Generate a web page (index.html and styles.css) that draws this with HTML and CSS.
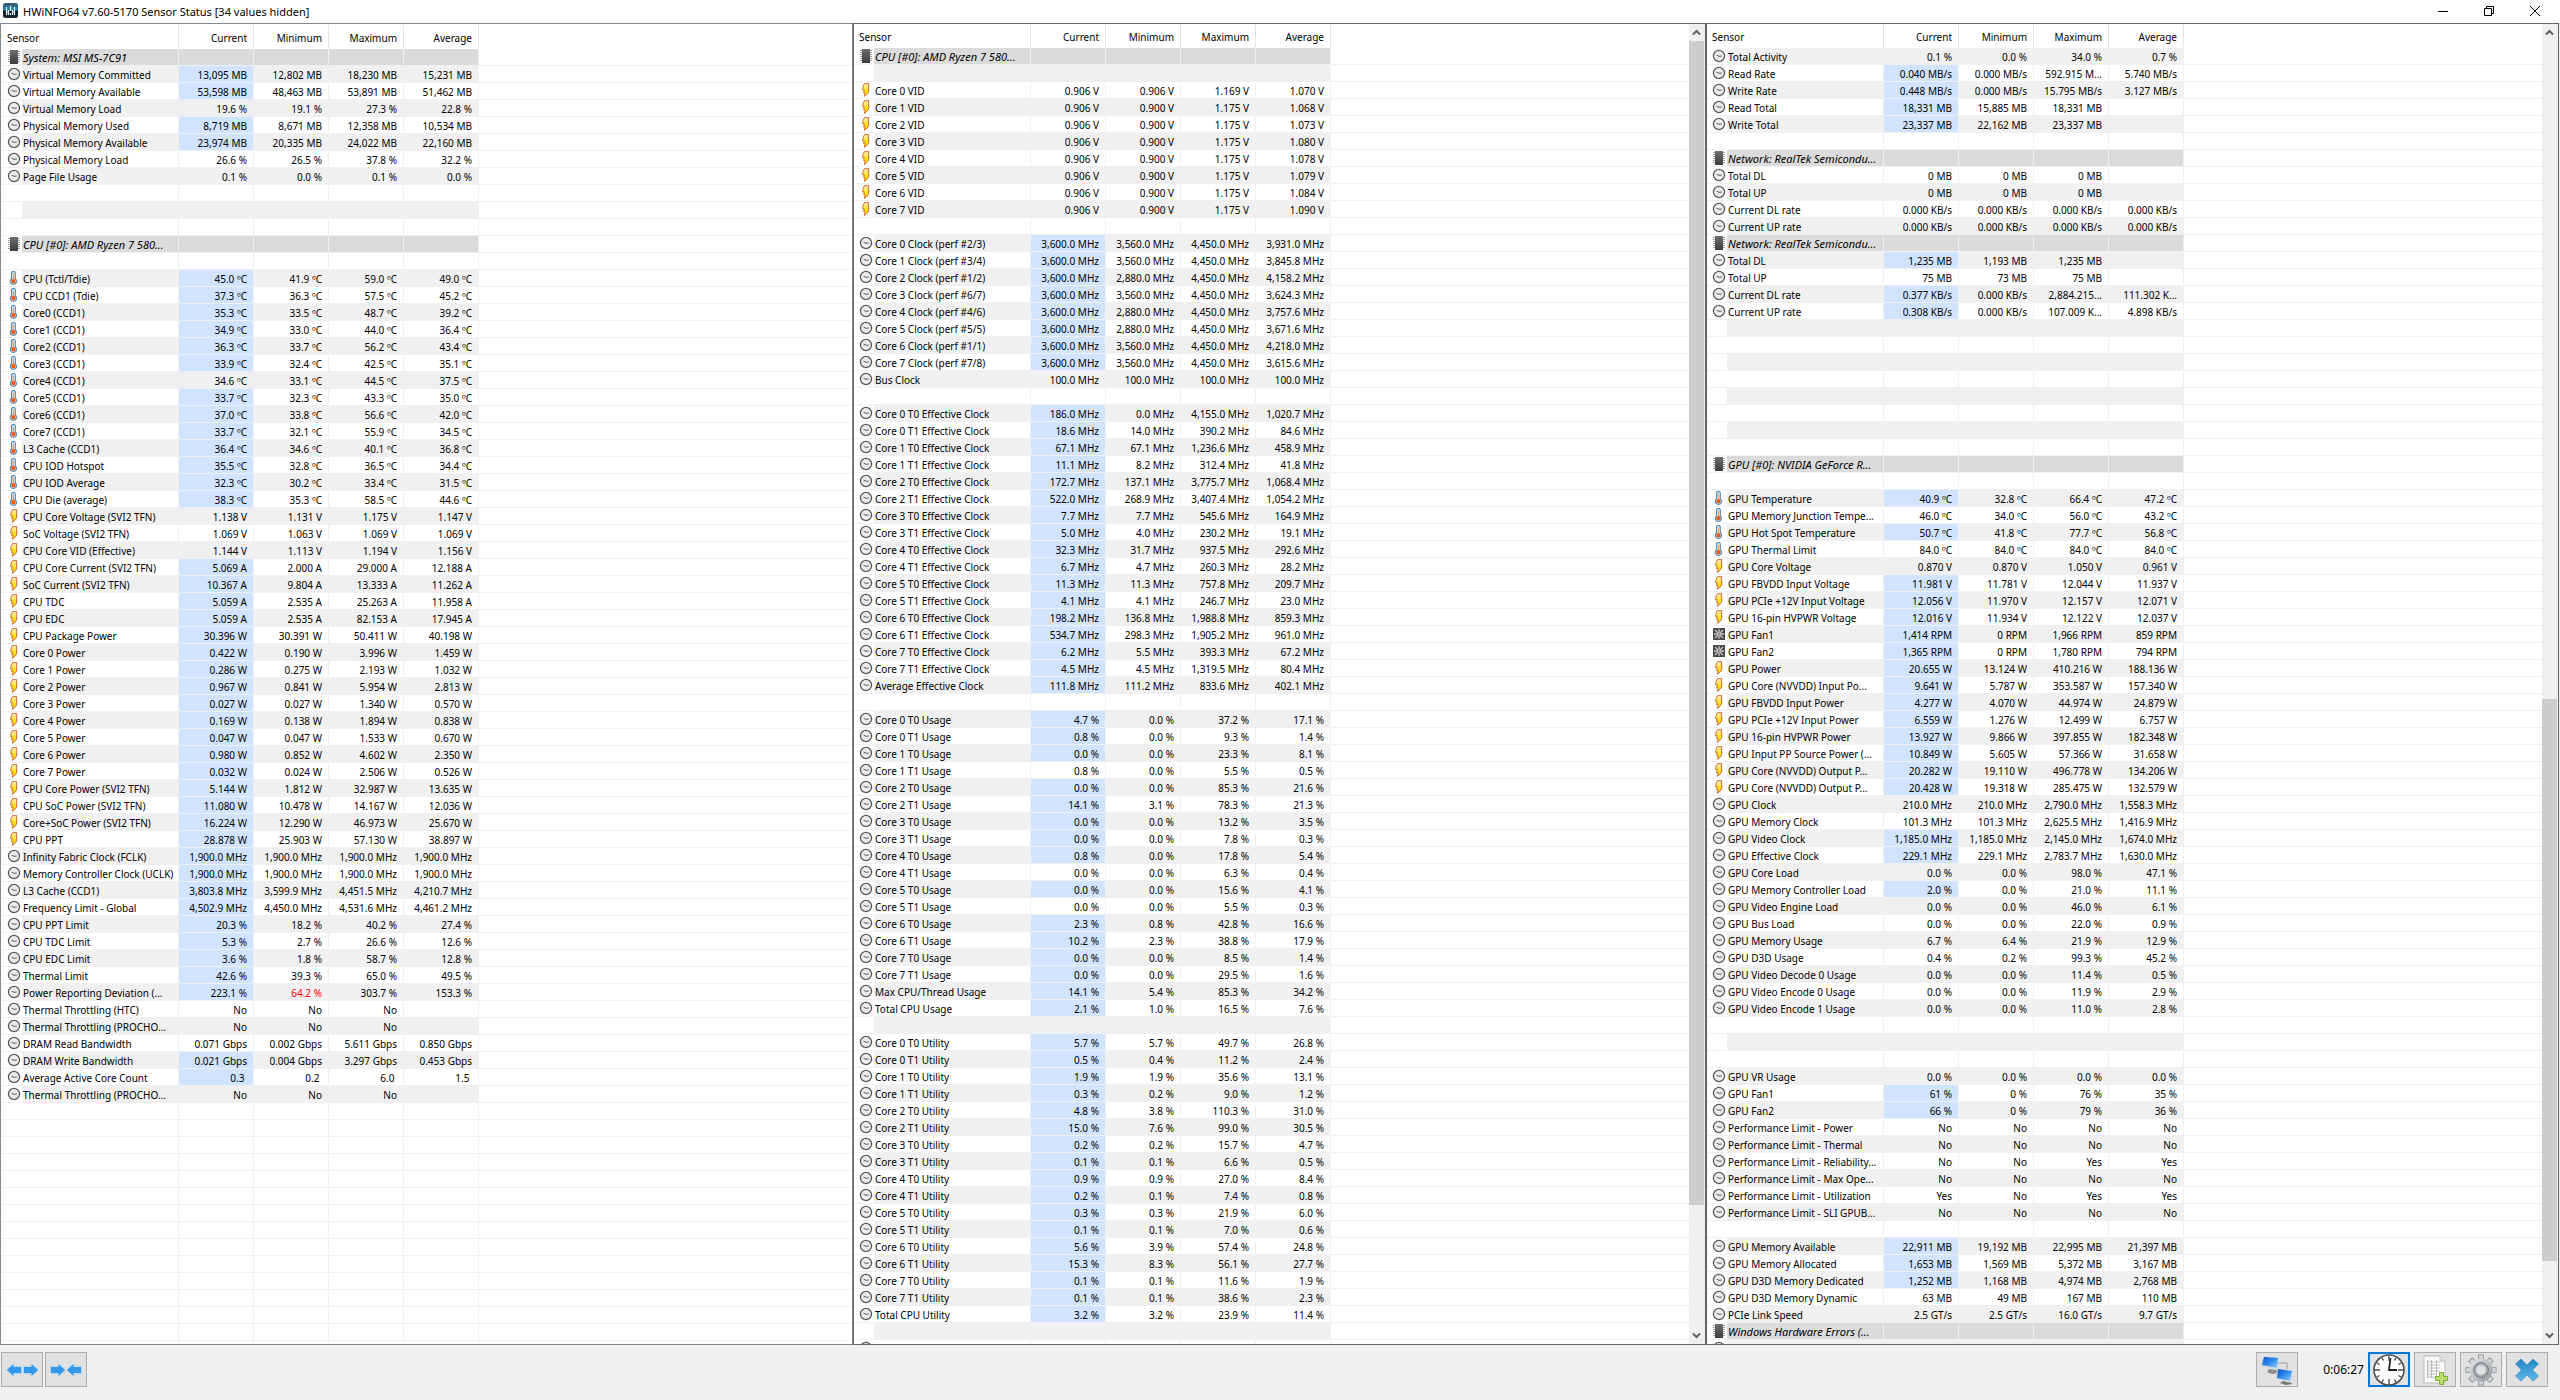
FILE: index.html
```html
<!DOCTYPE html>
<html lang="en">
<head>
<meta charset="utf-8">
<title>HWiNFO64 v7.60-5170 Sensor Status</title>
<link rel="stylesheet" href="styles.css">
</head>
<body>
<svg class="sprite" aria-hidden="true">
  <defs>
    <linearGradient id="g-app" x1="0" y1="0" x2="0" y2="1"><stop offset="0" stop-color="#3b5566"/><stop offset=".45" stop-color="#1f86b8"/><stop offset=".55" stop-color="#0a1a24"/><stop offset="1" stop-color="#1a2a33"/></linearGradient>
    <linearGradient id="g-bolt" x1="0" y1="0" x2="0" y2="1"><stop offset="0" stop-color="#fff0c8"/><stop offset=".6" stop-color="#ffe100"/><stop offset="1" stop-color="#ffee00"/></linearGradient>
    <linearGradient id="g-chip" x1="0" y1="0" x2="0" y2="1"><stop offset="0" stop-color="#6e6e70"/><stop offset="1" stop-color="#3c3c3f"/></linearGradient>
    <linearGradient id="g-screen" x1="0" y1="0" x2="1" y2="1"><stop offset="0" stop-color="#0a4fc4"/><stop offset=".5" stop-color="#2e8cf0"/><stop offset="1" stop-color="#9fd4ff"/></linearGradient>
    <linearGradient id="g-gear" x1="0" y1="0" x2="1" y2="1"><stop offset="0" stop-color="#e4e8e9"/><stop offset=".5" stop-color="#bcc2c4"/><stop offset="1" stop-color="#8f9698"/></linearGradient>
    <linearGradient id="g-x" x1="0" y1="0" x2="0" y2="1"><stop offset="0" stop-color="#1f86c4"/><stop offset="1" stop-color="#62b6ea"/></linearGradient>
  </defs>
  <symbol id="i-clock" viewBox="0 0 14 14"><circle cx="7" cy="7" r="6.4" fill="#c4c4c4"/><circle cx="7" cy="7" r="5.5" fill="#ececec" stroke="#484848" stroke-width="1.1"/><path d="M4.500 6.200 7 7.300l2.800-.3" fill="none" stroke="#5a5a5a" stroke-width="1"/></symbol>
  <symbol id="i-chip" viewBox="0 0 14 14"><path d="M1 1.500h12M1 3.500h12M1 5.500h12M1 7.500h12M1 9.500h12M1 11.500h12" stroke="#9c9c9c"/><path d="M3 0h8v14H3z" fill="url(#g-chip)"/></symbol>
  <symbol id="i-temp" viewBox="0 0 14 14"><path d="M4.500 8V1.900a1.900 1.500 0 0 1 3.800 0V8c2 1.700 1.600 5.400-1.900 5.400S2.500 9.700 4.500 8z" fill="#d3ebf8" stroke="#4f8db8" stroke-width="1.100"/><path d="M6.400 2.500v7" stroke="#f4a070" stroke-width="1.400"/><path d="M4.400 8.300h4v3.900h-4z" fill="#f05a14"/></symbol>
  <symbol id="i-bolt" viewBox="0 0 14 14"><path d="M5.500.6h4.300l-.6 3h.7L9.400 6.500h.7L9 10.200 5.400 13.400l.8-3.700H4.700l.5-3H3.600l.5-3.300z" fill="url(#g-bolt)" stroke="#c8602a" stroke-width=".9" stroke-linejoin="round"/></symbol>
  <symbol id="i-fan" viewBox="0 0 14 14"><path d="M1 1h12v12H1z" fill="#484848"/><path d="M7 2v10M2 7h10M3 3l8 8M11 3l-8 8" stroke="#cfc8c8" stroke-width="1.300"/><circle cx="7" cy="7" r="1.500" fill="#9a8686"/></symbol>
  <symbol id="i-left" viewBox="0 0 16 16"><path d="M0 8 8 0v4h8v8H8v4z" fill="#f4f9fd" stroke="#c3d3df" stroke-width=".6"/><path d="M.800 8 7.500 1.800v2.900h7.800v6.600H7.500v2.900z" fill="#3498e6"/></symbol>
  <symbol id="i-right" viewBox="0 0 16 16"><path d="M16 8 8 0v4H0v8h8v4z" fill="#f4f9fd" stroke="#c3d3df" stroke-width=".6"/><path d="M15.200 8 8.500 1.800v2.900H.700v6.600h7.800v2.900z" fill="#3498e6"/></symbol>
</svg>

<div class="window">
  <header class="titlebar">
    <svg class="app-icon" viewBox="0 0 15 15" aria-hidden="true"><rect width="15" height="15" rx="2.500" fill="url(#g-app)"/><path d="M3.500 4v8M5.500 7v5M7.500 3v5M7.500 10v2M9.500 7v5M11.500 4v8M3 9h3M9 9h3" stroke="#e6f4fa" stroke-width="1.200"/></svg>
    <h1 class="title">HWiNFO64 v7.60-5170 Sensor Status [34 values hidden]</h1>
    <button class="caption" aria-label="Minimize"><svg width="10" height="10" viewBox="0 0 10 10"><path d="M0 5.500h10" stroke="#000"/></svg></button>
    <button class="caption" aria-label="Restore"><svg width="10" height="10" viewBox="0 0 10 10"><path d="M.5 2.500h7v7h-7zM2.500 2.500v-2h7v7h-2" fill="none" stroke="#000"/></svg></button>
    <button class="caption" aria-label="Close"><svg width="10" height="10" viewBox="0 0 10 10"><path d="M0 0l10 10M10 0 0 10" stroke="#000"/></svg></button>
  </header>

  <main class="panels" id="panels"></main>

  <footer class="toolbar">
    <div class="group">
      <button class="tool" aria-label="Expand columns"><svg class="arrow"><use href="#i-left"/></svg><svg class="arrow"><use href="#i-right"/></svg></button>
      <button class="tool close-pair" aria-label="Shrink columns"><svg class="arrow"><use href="#i-right"/></svg><svg class="arrow"><use href="#i-left"/></svg></button>
    </div>
    <div class="group group-right">
      <button class="tool" aria-label="Remote monitoring"><svg width="34" height="32" viewBox="0 0 34 32"><path d="M17 9h10v8" fill="none" stroke="#9a9a9a"/><path d="M9 15l8 1 1 3-6 1-5-2z" fill="#8c8c8c"/><path d="M3 2l16 1-1 13L1 12z" fill="#d8dcdf"/><path d="M4 3l14 1-1 10L2 11z" fill="url(#g-screen)"/><path d="M23 27l8 1 1 2-6 1-6-2z" fill="#777"/><path d="M17 14l16 2-2 13-15-4z" fill="#d8dcdf"/><path d="M18 15l14 2-2 10-13-3z" fill="url(#g-screen)"/></svg></button>
      <time class="elapsed">0:06:27</time>
      <button class="tool tool-focus" aria-label="Reset clock"><svg width="32" height="32" viewBox="0 0 32 32"><circle cx="16" cy="16" r="15" fill="#fff" stroke="#4a4a4a" stroke-width="1.600"/><path d="M16 2v5M16 25v5M2 16h5M25 16h5M9 3.900l1.500 2.600M21.500 25.500l1.500 2.600M3.900 9l2.600 1.500M25.500 21.500l2.600 1.500M23 3.900l-1.500 2.600M10.500 25.500 9 28.100M28.100 9l-2.600 1.500M6.500 21.500 3.900 23" stroke="#444" stroke-width="1.300"/><path d="M17.500 4 16 16h8" fill="none" stroke="#222" stroke-width="1.800"/></svg></button>
      <button class="tool" aria-label="Log sensors"><svg width="30" height="32" viewBox="0 0 30 32"><path d="M4 2h16l5 5v22H4z" fill="#fafafa" stroke="#bdbdbd"/><path d="M20 2v5h5" fill="#e2e2e2" stroke="#bdbdbd"/><path d="M8 8h12M8 11h12M8 14h12M8 17h12M8 20h9M8 23h9M7.500 6v18M11.500 6v18M16.500 6v18" stroke="#bcbcbc"/><path d="M19.500 18.500h4v4h4v4h-4v4h-4v-4h-4v-4h4z" fill="#b9dc6a" stroke="#7fae35"/></svg></button>
      <button class="tool" aria-label="Configure sensors"><svg width="32" height="32" viewBox="0 0 32 32"><g stroke="#8d9496" stroke-width="6"><path d="M16 .500v31M.500 16h31M5.200 5.200l21.600 21.600M26.800 5.200 5.200 26.800"/></g><g stroke="#d0d5d7" stroke-width="4.400"><path d="M16 1.200v29.600M1.200 16h29.600M5.800 5.800l20.400 20.400M26.200 5.800 5.800 26.200"/></g><circle cx="16" cy="16" r="11.500" fill="url(#g-gear)"/><circle cx="16" cy="16" r="7.500" fill="#9fa5a7" stroke="#7c8385"/><circle cx="16" cy="16" r="5" fill="#e1e1e1" stroke="#c9cdce"/></svg></button>
      <button class="tool" aria-label="Close sensors"><svg width="24" height="24" viewBox="0 0 24 24"><path d="M6 1l6 6 6-6 5.500 5-6 6 6 6-5.500 5-6-6-6 6-5.500-5 6-6-6-6z" fill="url(#g-x)" stroke="#2d8cc8" stroke-width=".7"/></svg></button>
    </div>
  </footer>
</div>
<script src="app.js"></script>
</body>
</html>
```
FILE: styles.css
```css
* { box-sizing: border-box; }

body {
  margin: 0;
  background: #fff;
  color: #000;
  font-family: "Noto Sans", "Open Sans", sans-serif;
  font-size: 10px;
}

button { padding: 0; font: inherit; }
.sprite { position: absolute; width: 0; height: 0; }

.window {
  display: flex;
  flex-direction: column;
  height: 100vh;
  background: #f0f0f0;
}

/* Title bar */
.titlebar {
  display: flex;
  align-items: center;
  flex: none;
  height: 23px;
  padding: 0 2px 2px 3px;
  background: #fff;
}
.app-icon { width: 15px; height: 15px; }
.title {
  flex: 1;
  margin: 0 0 0 5px;
  padding-top: 2px;
  font-size: 11px;
  font-weight: 400;
  line-height: 16px;
}
.caption {
  display: flex;
  align-items: center;
  justify-content: center;
  width: 46px;
  height: 21px;
  border: 0;
  background: none;
}

/* Sensor lists */
.panels {
  display: grid;
  grid-template-columns: repeat(3, minmax(0, 1fr));
  flex: 1;
  min-height: 0;
  padding-right: 1px;
}
.panel {
  display: flex;
  min-height: 0;
  overflow: hidden;
  border: 1px solid #646464;
  background: #fff;
}
.panel-plain { padding: 1px; border-color: #828790; }
.list { flex: 1; min-width: 0; overflow: hidden; }

.sensors {
  width: 100%;
  border-spacing: 0;
  table-layout: fixed;
}
.col-icon { width: 20px; }
.col-name { width: 157px; }
.col-value { width: 75px; }

.sensors th, .sensors td {
  padding: 0;
  overflow: hidden;
  font-weight: 400;
  white-space: nowrap;
}
.sensors thead th {
  height: 24px;
  padding: 2px 6px 0 0;
  border-right: 1px solid #e5e5e5;
  text-align: right;
}
.sensors thead .head-name { padding-left: 5px; text-align: left; }
.sensors thead .head-rest { border-right: 0; }

.sensors tbody th, .sensors tbody td {
  height: 17px;
  border-right: 1px solid #f0f0f0;
  border-bottom: 1px solid #f0f0f0;
  line-height: 14px;
}
.sensors tbody th { padding: 2px 0 0 1px; text-align: left; }
.sensors tbody td { padding: 2px 6px 0 0; text-align: right; }
.sensors tbody .icon { padding: 0 0 0 5px; border-right: 0; }
.sensors tbody .rest { border-right: 0; }
.icon svg { display: block; width: 14px; height: 14px; }

.shade th, .shade .value { background: #f0f0f0; }
.section th, .section .value { background: #dbdbdb; }
.sensors .section th { font-size: 11px; font-style: italic; }
.sensors .value.changed { background: #d0e4ff; }
.sensors .value.alert { color: #f00; }

/* Scroll bars */
.scroll {
  display: flex;
  flex-direction: column;
  flex: none;
  width: 16px;
  padding-right: 1px;
  background: #f0f0f0;
}
.scroll svg { display: block; flex: none; width: 15px; height: 17px; }
.track { flex: 1; }
.thumb { background: #cdcdcd; }

/* Toolbar */
.toolbar {
  display: flex;
  justify-content: space-between;
  flex: none;
  padding: 7px 12px 13px 1px;
}
.group { display: flex; align-items: center; gap: 2px; }
.group-right { gap: 4px; }
.tool {
  display: flex;
  align-items: center;
  justify-content: center;
  gap: 1px;
  width: 42px;
  height: 35px;
  border: 1px solid #adadad;
  background: #e1e1e1;
}
.tool-focus { border: 2px solid #0078d7; }
.arrow { width: 16px; height: 16px; }
.close-pair { gap: 0; }
.elapsed { margin-left: 21px; font-size: 12px; line-height: 16px; }
```
FILE: app.js
```js
/* Rows are "icon|name|current|minimum|maximum|average".
   Icons: s section, c clock, t temperature, b bolt, f fan; an empty string is a spacer row.
   A "*" before the current value marks it as just changed, "!" marks an alert. */

const threads = (icon, label, rows) => rows.map((values, i) =>
  `${icon}|Core ${i >> 1} T${i % 2} ${label}|${values}`);
const blanks = n => Array(n).fill("");

const system = [
  "s|System: MSI MS-7C91",
  "c|Virtual Memory Committed|*13,095 MB|12,802 MB|18,230 MB|15,231 MB",
  "c|Virtual Memory Available|*53,598 MB|48,463 MB|53,891 MB|51,462 MB",
  "c|Virtual Memory Load|19.6 %|19.1 %|27.3 %|22.8 %",
  "c|Physical Memory Used|*8,719 MB|8,671 MB|12,358 MB|10,534 MB",
  "c|Physical Memory Available|*23,974 MB|20,335 MB|24,022 MB|22,160 MB",
  "c|Physical Memory Load|26.6 %|26.5 %|37.8 %|32.2 %",
  "c|Page File Usage|0.1 %|0.0 %|0.1 %|0.0 %",
  ...blanks(3),
  "s|CPU [#0]: AMD Ryzen 7 580...",
  "",
  "t|CPU (Tctl/Tdie)|*45.0 ºC|41.9 ºC|59.0 ºC|49.0 ºC",
  "t|CPU CCD1 (Tdie)|*37.3 ºC|36.3 ºC|57.5 ºC|45.2 ºC",
  "t|Core0 (CCD1)|*35.3 ºC|33.5 ºC|48.7 ºC|39.2 ºC",
  "t|Core1 (CCD1)|*34.9 ºC|33.0 ºC|44.0 ºC|36.4 ºC",
  "t|Core2 (CCD1)|*36.3 ºC|33.7 ºC|56.2 ºC|43.4 ºC",
  "t|Core3 (CCD1)|*33.9 ºC|32.4 ºC|42.5 ºC|35.1 ºC",
  "t|Core4 (CCD1)|34.6 ºC|33.1 ºC|44.5 ºC|37.5 ºC",
  "t|Core5 (CCD1)|*33.7 ºC|32.3 ºC|43.3 ºC|35.0 ºC",
  "t|Core6 (CCD1)|*37.0 ºC|33.8 ºC|56.6 ºC|42.0 ºC",
  "t|Core7 (CCD1)|*33.7 ºC|32.1 ºC|55.9 ºC|34.5 ºC",
  "t|L3 Cache (CCD1)|*36.4 ºC|34.6 ºC|40.1 ºC|36.8 ºC",
  "t|CPU IOD Hotspot|*35.5 ºC|32.8 ºC|36.5 ºC|34.4 ºC",
  "t|CPU IOD Average|*32.3 ºC|30.2 ºC|33.4 ºC|31.5 ºC",
  "t|CPU Die (average)|*38.3 ºC|35.3 ºC|58.5 ºC|44.6 ºC",
  "b|CPU Core Voltage (SVI2 TFN)|1.138 V|1.131 V|1.175 V|1.147 V",
  "b|SoC Voltage (SVI2 TFN)|1.069 V|1.063 V|1.069 V|1.069 V",
  "b|CPU Core VID (Effective)|1.144 V|1.113 V|1.194 V|1.156 V",
  "b|CPU Core Current (SVI2 TFN)|*5.069 A|2.000 A|29.000 A|12.188 A",
  "b|SoC Current (SVI2 TFN)|*10.367 A|9.804 A|13.333 A|11.262 A",
  "b|CPU TDC|*5.059 A|2.535 A|25.263 A|11.958 A",
  "b|CPU EDC|*5.059 A|2.535 A|82.153 A|17.945 A",
  "b|CPU Package Power|*30.396 W|30.391 W|50.411 W|40.198 W",
  "b|Core 0 Power|*0.422 W|0.190 W|3.996 W|1.459 W",
  "b|Core 1 Power|*0.286 W|0.275 W|2.193 W|1.032 W",
  "b|Core 2 Power|*0.967 W|0.841 W|5.954 W|2.813 W",
  "b|Core 3 Power|*0.027 W|0.027 W|1.340 W|0.570 W",
  "b|Core 4 Power|*0.169 W|0.138 W|1.894 W|0.838 W",
  "b|Core 5 Power|*0.047 W|0.047 W|1.533 W|0.670 W",
  "b|Core 6 Power|*0.980 W|0.852 W|4.602 W|2.350 W",
  "b|Core 7 Power|*0.032 W|0.024 W|2.506 W|0.526 W",
  "b|CPU Core Power (SVI2 TFN)|*5.144 W|1.812 W|32.987 W|13.635 W",
  "b|CPU SoC Power (SVI2 TFN)|*11.080 W|10.478 W|14.167 W|12.036 W",
  "b|Core+SoC Power (SVI2 TFN)|*16.224 W|12.290 W|46.973 W|25.670 W",
  "b|CPU PPT|*28.878 W|25.903 W|57.130 W|38.897 W",
  "c|Infinity Fabric Clock (FCLK)|*1,900.0 MHz|1,900.0 MHz|1,900.0 MHz|1,900.0 MHz",
  "c|Memory Controller Clock (UCLK)|*1,900.0 MHz|1,900.0 MHz|1,900.0 MHz|1,900.0 MHz",
  "c|L3 Cache (CCD1)|*3,803.8 MHz|3,599.9 MHz|4,451.5 MHz|4,210.7 MHz",
  "c|Frequency Limit - Global|*4,502.9 MHz|4,450.0 MHz|4,531.6 MHz|4,461.2 MHz",
  "c|CPU PPT Limit|*20.3 %|18.2 %|40.2 %|27.4 %",
  "c|CPU TDC Limit|*5.3 %|2.7 %|26.6 %|12.6 %",
  "c|CPU EDC Limit|*3.6 %|1.8 %|58.7 %|12.8 %",
  "c|Thermal Limit|*42.6 %|39.3 %|65.0 %|49.5 %",
  "c|Power Reporting Deviation (...|*223.1 %|!64.2 %|303.7 %|153.3 %",
  "c|Thermal Throttling (HTC)|No|No|No|",
  "c|Thermal Throttling (PROCHO...|No|No|No|",
  "c|DRAM Read Bandwidth|0.071 Gbps|0.002 Gbps|5.611 Gbps|0.850 Gbps",
  "c|DRAM Write Bandwidth|*0.021 Gbps|0.004 Gbps|3.297 Gbps|0.453 Gbps",
  "c|Average Active Core Count|*0.3\u00a0|0.2\u00a0|6.0\u00a0|1.5\u00a0",
  "c|Thermal Throttling (PROCHO...|No|No|No|",
];

const cpu = [
  "s|CPU [#0]: AMD Ryzen 7 580...",
  "",
  "b|Core 0 VID|0.906 V|0.906 V|1.169 V|1.070 V",
  "b|Core 1 VID|0.906 V|0.900 V|1.175 V|1.068 V",
  "b|Core 2 VID|0.906 V|0.900 V|1.175 V|1.073 V",
  "b|Core 3 VID|0.906 V|0.900 V|1.175 V|1.080 V",
  "b|Core 4 VID|0.906 V|0.900 V|1.175 V|1.078 V",
  "b|Core 5 VID|0.906 V|0.900 V|1.175 V|1.079 V",
  "b|Core 6 VID|0.906 V|0.900 V|1.175 V|1.084 V",
  "b|Core 7 VID|0.906 V|0.900 V|1.175 V|1.090 V",
  "",
  "c|Core 0 Clock (perf #2/3)|*3,600.0 MHz|3,560.0 MHz|4,450.0 MHz|3,931.0 MHz",
  "c|Core 1 Clock (perf #3/4)|*3,600.0 MHz|3,560.0 MHz|4,450.0 MHz|3,845.8 MHz",
  "c|Core 2 Clock (perf #1/2)|*3,600.0 MHz|2,880.0 MHz|4,450.0 MHz|4,158.2 MHz",
  "c|Core 3 Clock (perf #6/7)|*3,600.0 MHz|3,560.0 MHz|4,450.0 MHz|3,624.3 MHz",
  "c|Core 4 Clock (perf #4/6)|*3,600.0 MHz|2,880.0 MHz|4,450.0 MHz|3,757.6 MHz",
  "c|Core 5 Clock (perf #5/5)|*3,600.0 MHz|2,880.0 MHz|4,450.0 MHz|3,671.6 MHz",
  "c|Core 6 Clock (perf #1/1)|*3,600.0 MHz|3,560.0 MHz|4,450.0 MHz|4,218.0 MHz",
  "c|Core 7 Clock (perf #7/8)|*3,600.0 MHz|3,560.0 MHz|4,450.0 MHz|3,615.6 MHz",
  "c|Bus Clock|100.0 MHz|100.0 MHz|100.0 MHz|100.0 MHz",
  "",
  ...threads("c", "Effective Clock", [
    "*186.0 MHz|0.0 MHz|4,155.0 MHz|1,020.7 MHz",
    "*18.6 MHz|14.0 MHz|390.2 MHz|84.6 MHz",
    "*67.1 MHz|67.1 MHz|1,236.6 MHz|458.9 MHz",
    "*11.1 MHz|8.2 MHz|312.4 MHz|41.8 MHz",
    "*172.7 MHz|137.1 MHz|3,775.7 MHz|1,068.4 MHz",
    "*522.0 MHz|268.9 MHz|3,407.4 MHz|1,054.2 MHz",
    "*7.7 MHz|7.7 MHz|545.6 MHz|164.9 MHz",
    "*5.0 MHz|4.0 MHz|230.2 MHz|19.1 MHz",
    "*32.3 MHz|31.7 MHz|937.5 MHz|292.6 MHz",
    "*6.7 MHz|4.7 MHz|260.3 MHz|28.2 MHz",
    "*11.3 MHz|11.3 MHz|757.8 MHz|209.7 MHz",
    "*4.1 MHz|4.1 MHz|246.7 MHz|23.0 MHz",
    "*198.2 MHz|136.8 MHz|1,988.8 MHz|859.3 MHz",
    "*534.7 MHz|298.3 MHz|1,905.2 MHz|961.0 MHz",
    "*6.2 MHz|5.5 MHz|393.3 MHz|67.2 MHz",
    "*4.5 MHz|4.5 MHz|1,319.5 MHz|80.4 MHz",
  ]),
  "c|Average Effective Clock|*111.8 MHz|111.2 MHz|833.6 MHz|402.1 MHz",
  "",
  ...threads("c", "Usage", [
    "*4.7 %|0.0 %|37.2 %|17.1 %",
    "*0.8 %|0.0 %|9.3 %|1.4 %",
    "*0.0 %|0.0 %|23.3 %|8.1 %",
    "0.8 %|0.0 %|5.5 %|0.5 %",
    "*0.0 %|0.0 %|85.3 %|21.6 %",
    "*14.1 %|3.1 %|78.3 %|21.3 %",
    "*0.0 %|0.0 %|13.2 %|3.5 %",
    "*0.0 %|0.0 %|7.8 %|0.3 %",
    "*0.8 %|0.0 %|17.8 %|5.4 %",
    "0.0 %|0.0 %|6.3 %|0.4 %",
    "*0.0 %|0.0 %|15.6 %|4.1 %",
    "0.0 %|0.0 %|5.5 %|0.3 %",
    "*2.3 %|0.8 %|42.8 %|16.6 %",
    "*10.2 %|2.3 %|38.8 %|17.9 %",
    "*0.0 %|0.0 %|8.5 %|1.4 %",
    "*0.0 %|0.0 %|29.5 %|1.6 %",
  ]),
  "c|Max CPU/Thread Usage|*14.1 %|5.4 %|85.3 %|34.2 %",
  "c|Total CPU Usage|*2.1 %|1.0 %|16.5 %|7.6 %",
  "",
  ...threads("c", "Utility", [
    "*5.7 %|5.7 %|49.7 %|26.8 %",
    "*0.5 %|0.4 %|11.2 %|2.4 %",
    "*1.9 %|1.9 %|35.6 %|13.1 %",
    "*0.3 %|0.2 %|9.0 %|1.2 %",
    "*4.8 %|3.8 %|110.3 %|31.0 %",
    "*15.0 %|7.6 %|99.0 %|30.5 %",
    "*0.2 %|0.2 %|15.7 %|4.7 %",
    "*0.1 %|0.1 %|6.6 %|0.5 %",
    "*0.9 %|0.9 %|27.0 %|8.4 %",
    "*0.2 %|0.1 %|7.4 %|0.8 %",
    "*0.3 %|0.3 %|21.9 %|6.0 %",
    "*0.1 %|0.1 %|7.0 %|0.6 %",
    "*5.6 %|3.9 %|57.4 %|24.8 %",
    "*15.3 %|8.3 %|56.1 %|27.7 %",
    "*0.1 %|0.1 %|11.6 %|1.9 %",
    "*0.1 %|0.1 %|38.6 %|2.3 %",
  ]),
  "c|Total CPU Utility|*3.2 %|3.2 %|23.9 %|11.4 %",
  "",
  "c|",
];

const gpu = [
  "c|Total Activity|0.1 %|0.0 %|34.0 %|0.7 %",
  "c|Read Rate|*0.040 MB/s|0.000 MB/s|592.915 M...|5.740 MB/s",
  "c|Write Rate|*0.448 MB/s|0.000 MB/s|15.795 MB/s|3.127 MB/s",
  "c|Read Total|*18,331 MB|15,885 MB|18,331 MB|",
  "c|Write Total|*23,337 MB|22,162 MB|23,337 MB|",
  "",
  "s|Network: RealTek Semicondu...",
  "c|Total DL|0 MB|0 MB|0 MB|",
  "c|Total UP|0 MB|0 MB|0 MB|",
  "c|Current DL rate|0.000 KB/s|0.000 KB/s|0.000 KB/s|0.000 KB/s",
  "c|Current UP rate|0.000 KB/s|0.000 KB/s|0.000 KB/s|0.000 KB/s",
  "s|Network: RealTek Semicondu...",
  "c|Total DL|*1,235 MB|1,193 MB|1,235 MB|",
  "c|Total UP|75 MB|73 MB|75 MB|",
  "c|Current DL rate|*0.377 KB/s|0.000 KB/s|2,884.215...|111.302 K...",
  "c|Current UP rate|*0.308 KB/s|0.000 KB/s|107.009 K...|4.898 KB/s",
  ...blanks(8),
  "s|GPU [#0]: NVIDIA GeForce R...",
  "",
  "t|GPU Temperature|*40.9 ºC|32.8 ºC|66.4 ºC|47.2 ºC",
  "t|GPU Memory Junction Tempe...|46.0 ºC|34.0 ºC|56.0 ºC|43.2 ºC",
  "t|GPU Hot Spot Temperature|*50.7 ºC|41.8 ºC|77.7 ºC|56.8 ºC",
  "t|GPU Thermal Limit|84.0 ºC|84.0 ºC|84.0 ºC|84.0 ºC",
  "b|GPU Core Voltage|0.870 V|0.870 V|1.050 V|0.961 V",
  "b|GPU FBVDD Input Voltage|*11.981 V|11.781 V|12.044 V|11.937 V",
  "b|GPU PCIe +12V Input Voltage|*12.056 V|11.970 V|12.157 V|12.071 V",
  "b|GPU 16-pin HVPWR Voltage|*12.016 V|11.934 V|12.122 V|12.037 V",
  "f|GPU Fan1|*1,414 RPM|0 RPM|1,966 RPM|859 RPM",
  "f|GPU Fan2|*1,365 RPM|0 RPM|1,780 RPM|794 RPM",
  "b|GPU Power|*20.655 W|13.124 W|410.216 W|188.136 W",
  "b|GPU Core (NVVDD) Input Po...|*9.641 W|5.787 W|353.587 W|157.340 W",
  "b|GPU FBVDD Input Power|*4.277 W|4.070 W|44.974 W|24.879 W",
  "b|GPU PCIe +12V Input Power|*6.559 W|1.276 W|12.499 W|6.757 W",
  "b|GPU 16-pin HVPWR Power|*13.927 W|9.866 W|397.855 W|182.348 W",
  "b|GPU Input PP Source Power (...|*10.849 W|5.605 W|57.366 W|31.658 W",
  "b|GPU Core (NVVDD) Output P...|*20.282 W|19.110 W|496.778 W|134.206 W",
  "b|GPU Core (NVVDD) Output P...|*20.428 W|19.318 W|285.475 W|132.579 W",
  "c|GPU Clock|210.0 MHz|210.0 MHz|2,790.0 MHz|1,558.3 MHz",
  "c|GPU Memory Clock|101.3 MHz|101.3 MHz|2,625.5 MHz|1,416.9 MHz",
  "c|GPU Video Clock|*1,185.0 MHz|1,185.0 MHz|2,145.0 MHz|1,674.0 MHz",
  "c|GPU Effective Clock|*229.1 MHz|229.1 MHz|2,783.7 MHz|1,630.0 MHz",
  "c|GPU Core Load|0.0 %|0.0 %|98.0 %|47.1 %",
  "c|GPU Memory Controller Load|*2.0 %|0.0 %|21.0 %|11.1 %",
  "c|GPU Video Engine Load|0.0 %|0.0 %|46.0 %|6.1 %",
  "c|GPU Bus Load|0.0 %|0.0 %|22.0 %|0.9 %",
  "c|GPU Memory Usage|6.7 %|6.4 %|21.9 %|12.9 %",
  "c|GPU D3D Usage|0.4 %|0.2 %|99.3 %|45.2 %",
  "c|GPU Video Decode 0 Usage|0.0 %|0.0 %|11.4 %|0.5 %",
  "c|GPU Video Encode 0 Usage|0.0 %|0.0 %|11.9 %|2.9 %",
  "c|GPU Video Encode 1 Usage|0.0 %|0.0 %|11.0 %|2.8 %",
  ...blanks(3),
  "c|GPU VR Usage|0.0 %|0.0 %|0.0 %|0.0 %",
  "c|GPU Fan1|*61 %|0 %|76 %|35 %",
  "c|GPU Fan2|*66 %|0 %|79 %|36 %",
  "c|Performance Limit - Power|No|No|No|No",
  "c|Performance Limit - Thermal|No|No|No|No",
  "c|Performance Limit - Reliability...|No|No|Yes|Yes",
  "c|Performance Limit - Max Ope...|No|No|No|No",
  "c|Performance Limit - Utilization|Yes|No|Yes|Yes",
  "c|Performance Limit - SLI GPUB...|No|No|No|No",
  "",
  "c|GPU Memory Available|*22,911 MB|19,192 MB|22,995 MB|21,397 MB",
  "c|GPU Memory Allocated|*1,653 MB|1,569 MB|5,372 MB|3,167 MB",
  "c|GPU D3D Memory Dedicated|*1,252 MB|1,168 MB|4,974 MB|2,768 MB",
  "c|GPU D3D Memory Dynamic|63 MB|49 MB|167 MB|110 MB",
  "c|PCIe Link Speed|2.5 GT/s|2.5 GT/s|16.0 GT/s|9.7 GT/s",
  "s|Windows Hardware Errors (...",
  "c|",
];

const ICONS = { s: "chip", c: "clock", t: "temp", b: "bolt", f: "fan" };
const ROWS_PER_PANEL = 77;

const panels = [
  { rows: system, firstShaded: 1 },
  { rows: cpu, firstShaded: 1, scroll: [0, 90.5] },
  { rows: gpu, firstShaded: 0, scroll: [51.2, 43.7] },
];

function valueCell(text = "") {
  const state = text[0] === "*" ? " changed" : text[0] === "!" ? " alert" : "";
  return `<td class="value${state}">${state ? text.slice(1) : text}</td>`;
}

function rowHtml(row, shaded) {
  const [icon, name = "", ...values] = row.split("|");
  const kind = icon === "s" ? "section" : shaded ? "shade" : "";
  const svg = icon ? `<svg aria-hidden="true"><use href="#i-${ICONS[icon]}"/></svg>` : "";
  const cells = [0, 1, 2, 3].map(i => valueCell(values[i])).join("");
  return `<tr class="${kind}"><td class="icon">${svg}</td><th scope="row">${name}</th>${cells}<td class="rest"></td></tr>`;
}

function panelHtml({ rows, firstShaded, scroll }) {
  const body = Array.from({ length: ROWS_PER_PANEL }, (_, i) =>
    rowHtml(rows[i] || "", i < rows.length && i % 2 === firstShaded)).join("");
  const bar = scroll ? `<div class="scroll" aria-hidden="true">
      <svg viewBox="0 0 15 17"><path d="M4 10.500 7.500 7l3.500 3.500" fill="none" stroke="#606060" stroke-width="2"/></svg>
      <div class="track"><div style="height:${scroll[0]}%"></div><div class="thumb" style="height:${scroll[1]}%"></div></div>
      <svg viewBox="0 0 15 17"><path d="M4 6.500 7.500 10 11 6.500" fill="none" stroke="#606060" stroke-width="2"/></svg>
    </div>` : "";
  return `<section class="panel${scroll ? "" : " panel-plain"}"><div class="list"><table class="sensors">
    <colgroup><col class="col-icon"><col class="col-name">${'<col class="col-value">'.repeat(4)}<col></colgroup>
    <thead><tr><th class="head-name" colspan="2">Sensor</th><th>Current</th><th>Minimum</th><th>Maximum</th><th>Average</th><th class="head-rest"></th></tr></thead>
    <tbody>${body}</tbody></table></div>${bar}</section>`;
}

document.getElementById("panels").innerHTML = panels.map(panelHtml).join("");
```
